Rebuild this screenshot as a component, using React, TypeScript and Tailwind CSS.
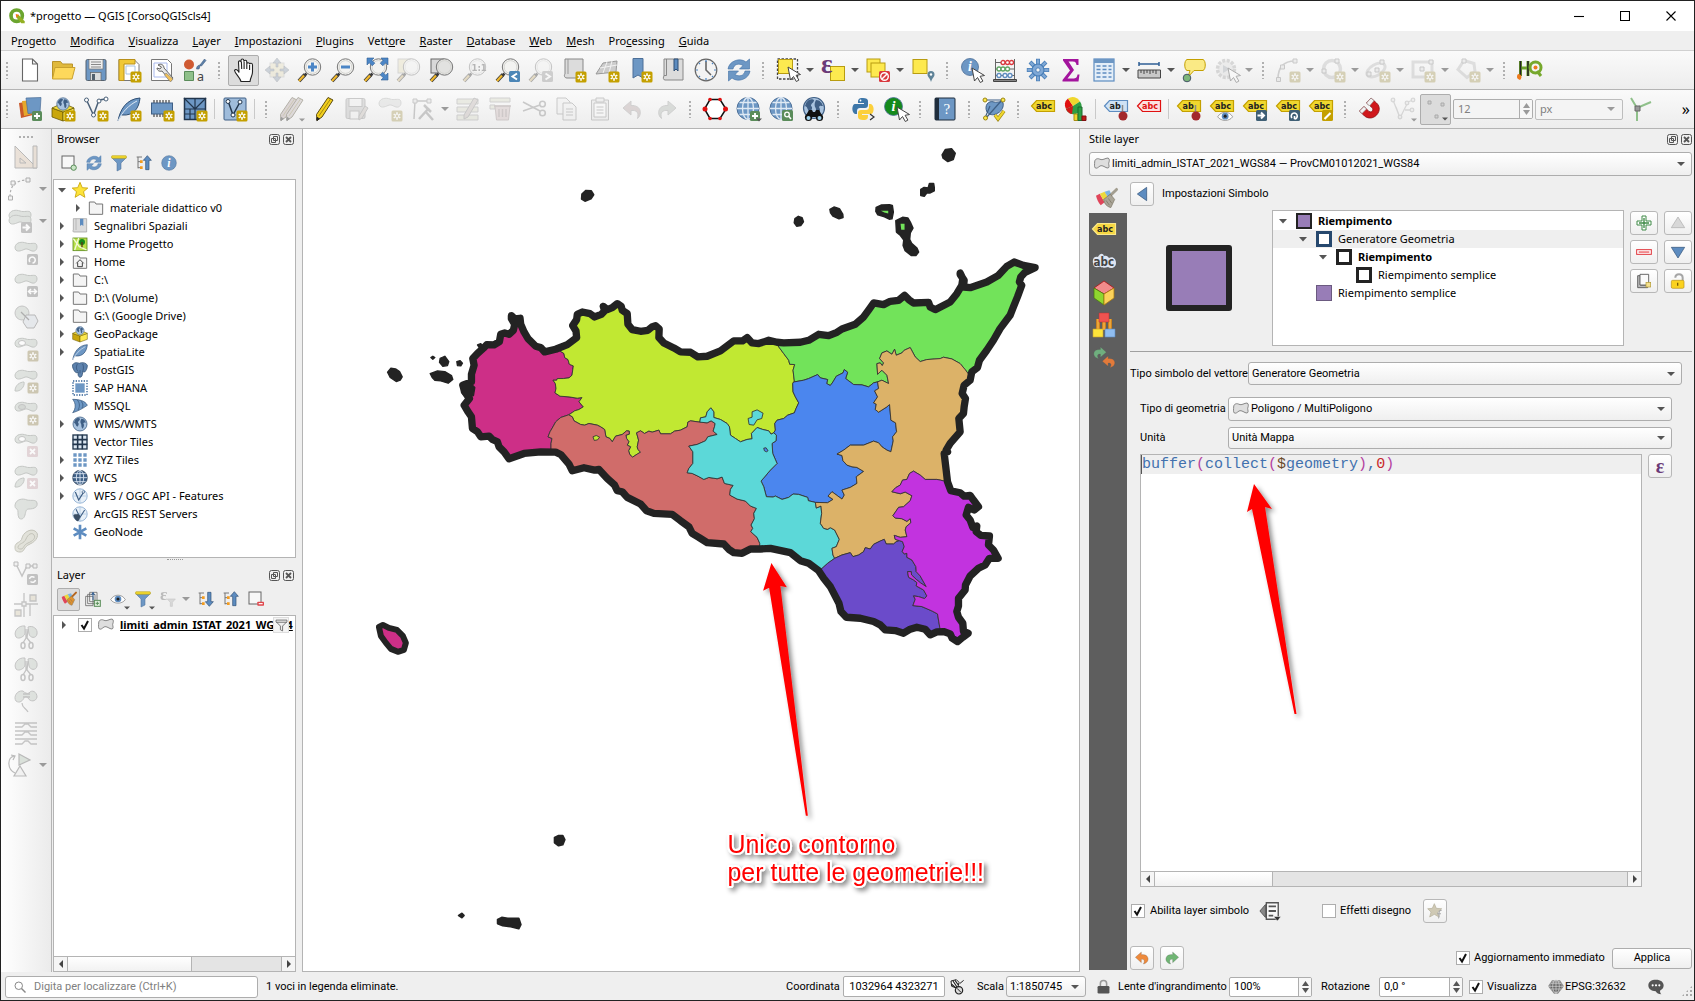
import React from 'react';

type Kids = { children?: React.ReactNode };

const Svg = ({ s = 24, children, className = '' }: Kids & { s?: number; className?: string }) => (
  <svg width={s} height={s} viewBox="0 0 24 24" fill="none" aria-hidden="true" className={`overflow-visible ${className}`}>
    {children}
  </svg>
);

/* ---------- shared icon parts ---------- */

const Star8 = ({ c = '#fff' }) => (
  <path d="M19 15.2v7.6M15.7 17.1l6.6 3.8M15.7 20.9l6.6-3.8" stroke={c} strokeWidth="1.6" />
);
const NewBadge = ({ c = '#c4a000' }) => (
  <g>
    <rect x="13.5" y="13.5" width="11" height="11" rx="1.5" fill={c} />
    <Star8 />
    <circle cx="19" cy="19" r="1.2" fill={c} />
  </g>
);
const PlusBadge = () => (
  <g>
    <rect x="14" y="14" width="10" height="10" rx="1.5" fill="#5a8c5a" />
    <path d="M19 16v6M16 19h6" stroke="#fff" strokeWidth="1.8" />
  </g>
);
const Lens = ({ children, dark = false }: Kids & { dark?: boolean }) => (
  <g>
    <path d="M8.5 15.5l-3 3" stroke="#3b3b3b" strokeWidth="2.6" />
    <path d="M7 16.500l-6 6.500" stroke="#3b3b3b" strokeWidth="3.800" />
    <path d="M6 17.500l-5 5.500" stroke="#f0b82d" strokeWidth="2.200" />
    <circle cx="14.500" cy="9" r="8.200" fill={dark ? '#e2e2e0' : '#f3f3f1'} stroke="#777" strokeWidth="1" />
    <circle cx="14.500" cy="9" r="6.400" stroke="#d6d6d2" strokeWidth="1" />
    {children}
  </g>
);
const Cursor = ({ x = 0, y = 0 }) => (
  <path transform={`translate(${x} ${y})`} d="M11 9l2.500 13 3-3.500 2.800 5 2.600-1.400-2.800-4.800 4.400-.8z" fill="#fff" stroke="#444" strokeWidth="1" />
);
const GlobeShape = ({ dark = false }) => (
  <g>
    <circle cx="12" cy="11.500" r="11" fill={dark ? '#3e5f86' : '#6d97c4'} stroke={dark ? '#26374c' : '#4c6f98'} />
    <path d="M1 11.500h22M12 .5v22M3.500 5.500h17M3.500 17.500h17" stroke="#dfe9f4" strokeWidth="1.300" />
    <ellipse cx="12" cy="11.500" rx="5.500" ry="11" stroke="#dfe9f4" strokeWidth="1.300" />
  </g>
);
const EarthShape = ({ x = 12, y = 12, r = 11 }) => (
  <g transform={`translate(${x} ${y}) scale(${r / 11})`}>
    <circle r="10.500" fill="#a9c3df" stroke="#3f5f85" strokeWidth="1.200" />
    <path d="M-8-5c3-5 7-4 8-3 0 3-3 3-3 6 2 1 1 4-1 6-3-2-2-5-5-6zM2-8c4 0 6 3 7 6-2 0-3-1-4 1 1 2 2 4-1 8-3-2-1-6-3-8-1-3 0-5 1-7z" fill="#3f5f85" />
  </g>
);
const Tag = ({ fill = '#f0d72e', stroke = '#c4a000', color = '#222', y = 4, text = 'abc' }) => (
  <g>
    <path d={`M.500 ${y + 6}l5-5.500h18v11H5.500z`} fill={fill} stroke={stroke} strokeWidth="1.200" />
    <text x={text === 'abc' ? 5 : 5.500} y={y + 9.200} fontFamily="DejaVu Sans Condensed, sans-serif" fontSize="9" fontWeight="bold" fill={color}>{text}</text>
  </g>
);
const Blob = ({ dy = 0 }) => (
  <path transform={`translate(0 ${dy})`} d="M1 6C2 1 8 .500 12 2c4 1.500 9-1 10.500 1.500C24 7 22 11 18 10c-3-1-5-3-8-1.500C7 10 1 12 1 6z" fill="#d3d8d3" stroke="#a9ada9" />
);
const Sq = ({ children, fill = '#a8a8a8' }: Kids & { fill?: string }) => (
  <g>
    <rect x="13" y="13" width="11" height="11" rx="1.500" fill={fill} />
    {children}
  </g>
);
const Pencil = ({ c = '#f2cf1d', x = 0 }) => (
  <g transform={`translate(${x} 0)`}>
    <path d="M16 .5l5 2.500L10 20l-5 3.500L4.500 17.500z" fill={c} stroke="#5a4a12" strokeWidth="1" />
    <path d="M18.500 2L7 18.800" stroke="#a58a10" />
    <path d="M4.800 23.500l.2-3 2.400 1.200z" fill="#222" stroke="#222" />
  </g>
);
const RefreshShape = () => (
  <g fill="#6d97c4" stroke="#3f6fa5" strokeWidth=".6">
    <path d="M1 11C2 3 13-1 19 4l3.500-3v10h-10l3.500-3.500C12 5 7 6 6 11z" />
    <path d="M23 13c-1 8-12 12-18 7l-3.500 3V13h10L8 16.500C12 19 17 18 18 13z" />
  </g>
);
const FunnelShape = ({ fill = '#6d97c4' }) => (
  <g>
    <path d="M1 4l8 8v12l6-3v-9l8-8z" fill={fill} stroke="#4c6f98" strokeWidth=".8" />
    <rect x="1" y="1" width="22" height="4" rx="1" fill="#f0d72e" stroke="#b89c10" strokeWidth=".8" />
  </g>
);
const Info = ({ r = 10, c = '#6d97c4', x = 12, y = 12 }) => (
  <g>
    <circle cx={x} cy={y} r={r} fill={c} stroke="#4c6f98" strokeWidth=".8" />
    <text x={x} y={y + r * 0.5} textAnchor="middle" fontFamily="Liberation Serif, serif" fontStyle="italic" fontWeight="bold" fontSize={r * 1.6} fill="#fff">i</text>
  </g>
);
const Feather = () => (
  <g>
    <path d="M1 24C3 13 9 2 23 1c-1 10-6 18-18 17" fill="#6d97c4" stroke="#2f4f74" strokeWidth="1" />
    <path d="M1 24C5 15 12 8 20 4" stroke="#dfe9f4" strokeWidth="1" />
  </g>
);
const Box3 = () => (
  <g>
    <path d="M1 11l11 4v9L1 20z" fill="#c9a60c" stroke="#6b5a05" strokeWidth=".8" />
    <path d="M23 11l-11 4v9l11-4z" fill="#fce94f" stroke="#6b5a05" strokeWidth=".8" />
    <path d="M1 11l11-5 11 5-11 4z" fill="#f3dc3a" stroke="#6b5a05" strokeWidth=".8" />
    <EarthShape x={12} y={7} r={6.500} />
  </g>
);
const Folder = ({ children }: Kids) => (
  <g>
    <path d="M2 21.500V3h8l2 3h10v15.500z" fill="#f4f4f4" stroke="#777" strokeWidth="1.500" />
    {children}
  </g>
);
const PolyShape = () => (
  <path d="M1 9c0-5 5-6 8-4 4 2 8-2 12-2 3 1 2 5 1 8 0 3 2 6-1 7-4 0-8-5-12-3-3 2-4 4-7 3-2-2-1-6-1-9z" fill="#dedede" stroke="#777" strokeWidth="1.300" />
);
const ArrowUpTree = ({ up = true }) => (
  <g>
    <path d="M1 3h8M3 3v17M3 10h5M3 19h5" stroke="#777" strokeWidth="1.500" />
    <path d="M6 8h4v4H6zM6 17h4v4H6z" fill="#f39b1d" />
    <path d={up ? 'M17 1l6 7h-3.500v14h-5V8H11z' : 'M17 23l6-7h-3.500V2h-5v14H11z'} fill="#5d8cc0" stroke="#2f4f74" />
  </g>
);
const Brush = ({ head = '#aaa598', stick = '#a39e90' }) => (
  <g>
    <path d="M1 9l4-2 5 9-4 3C4 17 2 13 1 9z" fill="#e0455a" />
    <path d="M5 7l5-2 4 6-4 5z" fill="#ecd93c" />
    <path d="M10 5l5-1.500 3 6-4 2z" fill="#7db4e0" />
    <path d="M15.500 9.500L22.500 2.500" stroke={stick} strokeWidth="3" strokeLinecap="round" />
    <path d="M9 13l7-5.500 4.500 5.500-4 8.500c-4-1-7-4-7.500-8.500z" fill={head} stroke="#77705f" strokeWidth=".7" />
    <path d="M11.500 14l3.500 5M14 12l3.500 5" stroke="#77705f" strokeWidth=".7" />
  </g>
);
const Redo = ({ c = '#5fa562', flip = false }) => (
  <path transform={flip ? 'matrix(-1 0 0 1 24 0)' : undefined} d="M13 3l9 8-9 8v-5c-4-.500-6 2-3 7-5-1-8-5-7-9 1-4 5-5.500 10-5z" fill={c} stroke="#555" strokeOpacity=".35" />
);
const Eye = () => (
  <g>
    <path d="M1 13C6 4 18 4 23 13 18 20 6 20 1 13z" fill="#fff" stroke="#777" />
    <circle cx="12" cy="12" r="5" fill="#5d8cc0" />
    <circle cx="12" cy="12" r="2.300" fill="#222" />
  </g>
);
const Epsilon = ({ size = 22, x = 5, y = 17, c = '#6b3a78' }) => (
  <text x={x} y={y} fontFamily="Liberation Serif, serif" fontWeight="bold" fontSize={size} fill={c}>ε</text>
);

/* ---------- icon table ---------- */

const I: Record<string, React.ReactNode> = {
  newDoc: <path d="M4.500 1h10l5 5v17h-15zM14.500 1v5h5" fill="#fff" stroke="#666" strokeWidth="1.100" />,
  open: <g><path d="M1.500 21V3.500h8l2 2.500h10v4" fill="#e0b93c" stroke="#b9932a" /><path d="M1.500 21L4 9.500h20L21 21z" fill="#fdd85b" stroke="#c9a12e" /></g>,
  save: <g><rect x="2" y="1.500" width="20" height="21" rx="1.500" fill="#6d97c4" stroke="#54616e" /><rect x="5" y="1.500" width="14" height="9.500" fill="#eee" stroke="#777" strokeWidth=".7" /><path d="M7 4h10M7 6.500h10M7 9h10" stroke="#888" /><rect x="6.500" y="14.500" width="10.500" height="8" fill="#ddd" stroke="#666" strokeWidth=".7" /><rect x="8" y="16" width="3" height="6" fill="#54616e" /></g>,
  layoutNew: <g><path d="M2 1.500h15l5 5v16H2z" fill="#fff" stroke="#777" /><path d="M2 1.500h16V6H7v16.500H2z" fill="#f0c836" stroke="#b8901a" /><path d="M9 8h9v8H9z" stroke="#a9c3df" /><NewBadge /></g>,
  layoutMgr: <g><path d="M1.500 1.500h16l4 4v17h-20z" fill="#fff" stroke="#777" /><path d="M4 5h13v14H4z" stroke="#a9b9ee" /><path d="M8 7c3-2 6 0 6 3l9 10-2.500 3L12 13c-3 1-5-1-5-3l3 1 1.500-2z" fill="#e7e7e7" stroke="#666" /><path d="M16 15l7 6-2.500 3-6-7z" fill="#f0c05a" stroke="#777" strokeWidth=".6" /></g>,
  styleMgr: <g><circle cx="6" cy="6.500" r="5" fill="#cf5a32" /><path d="M13.500 11c0-3 2-4 4-4l-1.500 4zM17 7l4.500-6L23 2.500 18.500 8z" fill="#5d7fa8" stroke="#3f5f85" strokeWidth=".6" /><path d="M1.500 13.500h9v9h-9z" fill="#8fc08a" stroke="#5a8c5a" /><text x="14" y="22.500" fontFamily="Noto Sans" fontSize="12.500" fill="#444">a</text></g>,
  pan: <path d="M9 23.500c-1-4-6-8-6.500-11 1-2 3.500-.5 4.500 2L6.500 4.500c-.3-2 2.300-2.300 2.700-.3L9 2.500c0-2 2.700-2 2.900 0v1.200c.2-2 2.800-1.800 2.900.2v2c.2-1.700 2.700-1.600 2.800.4.300-1.600 2.900-1.300 2.900.7V14c0 4-2 5-2.500 9.500zM9.400 4l.3 7M12.100 4v7M14.800 5v6M17.600 7v5" fill="#fff" stroke="#222" strokeWidth="1.100" />,
  panSel: <g><rect x="5" y="5" width="14" height="14" fill="#f0e08a" stroke="#bbb" /><path d="M12 0l4 5h-3v4h-2V5H8zM12 24l4-5h-3v-4h-2v4H8zM0 12l5-4v3h4v2H5v3zM24 12l-5-4v3h-4v2h4v3z" fill="#7ea3cd" stroke="#567" strokeWidth=".5" /></g>,
  zoomIn: <Lens><path d="M14.500 4.500v9M10 9h9" stroke="#4c86c6" strokeWidth="3" /></Lens>,
  zoomOut: <Lens><path d="M10 9h9" stroke="#4c86c6" strokeWidth="3" /></Lens>,
  zoomFull: <g><Lens /><path d="M3 0h7L7.800 2.200l3 3-2.600 2.600-3-3L3 7zM24 0v7l-2.200-2.200-3 3-2.600-2.600 3-3L17 0zM24 22h-7l2.200-2.200-3-3 2.600-2.600 3 3L24 15z" fill="#4c86c6" stroke="#2f5f95" strokeWidth=".6" /></g>,
  zoomSel: <g><rect x="1" y="1" width="13" height="14" fill="#f0e08a" stroke="#aaa" /><Lens /></g>,
  zoomLayer: <g><rect x="1" y="1" width="13" height="14" fill="#d8d8d8" stroke="#666" /><Lens dark /></g>,
  zoomNative: <Lens><text x="8.500" y="13" fontFamily="DejaVu Sans Condensed" fontWeight="bold" fontSize="9.500" fill="#555">1:1</text></Lens>,
  zoomLast: <g><Lens /><Sq fill="#4c86b6"><path d="M21 15.500l-4.500 3 4.500 3" stroke="#fff" strokeWidth="2" /></Sq></g>,
  zoomNext: <g><Lens /><Sq fill="#999"><path d="M16.500 15.500l4.500 3-4.500 3" stroke="#fff" strokeWidth="2" /></Sq></g>,
  newMap: <g><path d="M3 1h18v19H5c-3 0-3-3-2-4z" fill="#dcdcdc" stroke="#888" /><path d="M6 1v15" stroke="#999" /><NewBadge /></g>,
  new3d: <g><path d="M1 16L8 5l14-2-1 11z" fill="#ccc" stroke="#999" /><path d="M5 10l17-3M8 15l4-11M14 15l3-12" stroke="#f2f2f2" /><NewBadge /></g>,
  newBook: <g><path d="M5 .500h10V20l-5-3-5 3z" fill="#6d97c4" stroke="#4c6f98" /><NewBadge /></g>,
  book: <g><path d="M3 1h19v21H4c-2 0-2-3-1-4z" fill="#dcdcdc" stroke="#888" /><path d="M5.500 1v16.500H3" stroke="#888" /><path d="M13 1h4v12l-2-2-2 2z" fill="#5d8cc0" stroke="#2f4f74" /></g>,
  clock: <g><circle cx="12" cy="12" r="10.800" fill="#f3f3f3" stroke="#666" strokeWidth="1.200" /><path d="M12 3v9l5 5" stroke="#666" strokeWidth="1.600" /><path d="M12 2v2M12 20v2M2 12h2M20 12h2M5 5l1 1M19 5l-1 1M5 19l1-1M19 19l-1-1" stroke="#4c86c6" strokeWidth="1.200" /></g>,
  refresh: <RefreshShape />,
  select: <g><rect x="1.500" y="1" width="20" height="20" stroke="#444" strokeWidth="1.300" strokeDasharray="2.500 1.500" /><rect x="2.500" y="1.500" width="14" height="14" fill="#fde94f" stroke="#b89c10" /><Cursor x={1} /></g>,
  selEps: <g><rect x="9.500" y="8.500" width="14" height="14" fill="#fde94f" stroke="#b89c10" /><Epsilon size={27} x={0} y={15} /></g>,
  deselect: <g><rect x="1" y="1" width="13" height="13" fill="#fde94f" stroke="#b89c10" /><rect x="5" y="5" width="14" height="14" fill="#fde94f" stroke="#b89c10" /><Sq fill="#d9393e"><circle cx="18.500" cy="18.500" r="3.800" stroke="#fff" strokeWidth="1.400" /><path d="M16 21l5-5" stroke="#fff" strokeWidth="1.400" /></Sq></g>,
  selLoc: <g><rect x="2" y="1.500" width="14" height="14" fill="#fde94f" stroke="#b89c10" /><path d="M20 24c-1-4-3.500-5-3.500-7.500a3.500 3.500 0 017 0C23.500 19 21 20 20 24z" fill="#5f8398" /><circle cx="20" cy="16.500" r="1.200" fill="#fff" /></g>,
  identify: <g><Info r={8.500} x={10} y={9} /><Cursor x={1} y={1} /></g>,
  abacus: <g><path d="M2.500 1v20M21.500 1v20M2 4.500h20M2 11h20M2 17.500h20" stroke="#666" strokeWidth="1" /><path d="M.500 21.500h23v2H.500z" fill="#888" stroke="#444" /><g fill="#fff" strokeWidth="1.300"><g stroke="#d9393e"><circle cx="10" cy="4.500" r="2" /><circle cx="14.500" cy="4.500" r="2" /><circle cx="18.500" cy="4.500" r="2" /></g><g stroke="#5fa562"><circle cx="6" cy="11" r="2" /><circle cx="10" cy="11" r="2" /><circle cx="14.500" cy="11" r="2" /></g><g stroke="#5d8cc0"><circle cx="6" cy="17.500" r="2" /><circle cx="12" cy="17.500" r="2" /><circle cx="17" cy="17.500" r="2" /></g></g></g>,
  gear: <g stroke="#4c80b8"><g strokeWidth="4"><path d="M12 .800v22.400M.800 12h22.400M4 4l16 16M20 4L4 20" /></g><g stroke="#7fa8d6" strokeWidth="2.400"><path d="M12 1.500v21M1.500 12h21M4.500 4.500l15 15M19.500 4.500l-15 15" /></g><circle cx="12" cy="12" r="6" fill="#7fa8d6" strokeWidth="1.200" /><circle cx="12" cy="12" r="2.200" fill="#f4f4f4" /></g>,
  sigma: <path d="M4 1h15.500v6h-2C17 4 16 3.500 13 3.500H9.500L15 12l-6.500 8.500H14c3 0 4-1 4.500-4h2L19.500 23.500H3.500V22L11 12.500 4 2.500z" fill="#a3149d" />,
  table: <g><rect x="2" y="1" width="20" height="22" fill="#e4eef8" stroke="#5d8cc0" strokeWidth="1.200" /><path d="M2 1h20v4H2z" fill="#6d97c4" /><path d="M4.500 8h4M10.500 8h4M16.500 8h3M4.500 11.500h4M10.500 11.500h4M16.500 11.500h3M4.500 15h4M10.500 15h4M16.500 15h3M4.500 19h4M10.500 19h4M16.500 19h3" stroke="#5d8cc0" strokeWidth="1.400" /></g>,
  measure: <g><path d="M2 6h20M2 4v4M22 4v4" stroke="#2f5f95" strokeWidth="1.500" /><path d="M1 12h22.500v8H1z" fill="#c8c8c8" stroke="#444" /><path d="M4 12v3M7 12v4M10 12v3M13 12v4M16 12v3M19 12v4" stroke="#444" /></g>,
  tip: <g><path d="M5 1.500h16c3 1 3 10 0 11H12L6 19l2-6.500H5c-3-1-3-10 0-11z" fill="#faea85" stroke="#c4a000" /><circle cx="5" cy="20" r="3.800" fill="#7db67a" stroke="#456" /></g>,
  action: <g><circle cx="11" cy="11" r="8.500" fill="#ddd" stroke="#aaa" strokeWidth="3.500" strokeDasharray="3 1.500" /><path d="M8 7l7 4-7 4z" fill="#9ab" /><Cursor x={2} y={1} /></g>,
  arc: <g><path d="M2 21C2 9 8 3 19 3" stroke="#999" strokeWidth="1.600" /><path d="M.500 19.500h4v4h-4zM4.500 7h4v4h-4zM17 1h4v4h-4z" fill="#ddd" stroke="#888" /><NewBadge /></g>,
  circ: <g><circle cx="11" cy="11" r="8.500" stroke="#bbb" strokeWidth="3.500" /><path d="M14 1h4v4h-4zM1 11h4v4H1z" fill="#ddd" stroke="#888" /><NewBadge /></g>,
  ellip: <g><ellipse cx="10" cy="12" rx="10" ry="5.500" transform="rotate(-30 10 12)" stroke="#bbb" strokeWidth="3" /><path d="M9 10h4v4H9zM14 2h4v4h-4zM1 14h4v4H1z" fill="#ddd" stroke="#888" /><NewBadge /></g>,
  rectg: <g><rect x="2" y="4" width="19" height="15" stroke="#bbb" strokeWidth="3" /><path d="M9 9h4v4H9zM18 2h4v4h-4z" fill="#ddd" stroke="#888" /><NewBadge /></g>,
  poly: <g><path d="M8 2.500l10 3 1 8-8 6-9-8z" stroke="#bbb" strokeWidth="3" /><path d="M6 1h4v4H6z" fill="#ddd" stroke="#888" /><NewBadge /></g>,
  hq: <g><path d="M3.500 3v15M11 3v15M2.500 10h9" stroke="#6da32b" strokeWidth="3" /><path d="M3.500 3v15M11 3v15" stroke="#222" strokeWidth="1.600" /><circle cx="18.500" cy="9.500" r="5.500" stroke="#76a82c" strokeWidth="3" /><path d="M20 13l4 5" stroke="#76a82c" strokeWidth="3" /><circle cx="18.500" cy="9.500" r="2" fill="#ee7a1c" /><path d="M3 22c-3-1-4-3-2-6 3 0 5 3 2 6z" fill="#ee7a1c" /></g>,

  dsm: <g><path d="M1 6l12-2 2 14-12 3z" fill="#c9592a" /><path d="M4 4l12-1 2 13-12 3z" fill="#e5a82c" /><path d="M8 1l15-.5-1 15-12 1z" fill="#6d97c4" stroke="#4c6f98" strokeWidth=".7" /><PlusBadge /></g>,
  gpkg: <g><Box3 /><NewBadge /></g>,
  shp: <g><path d="M2.500 3l7 15 5.500-15 7-1" stroke="#4a6078" strokeWidth="1.500" /><g fill="#fff" stroke="#4a6078"><circle cx="2.500" cy="3" r="2" /><circle cx="9.500" cy="18" r="2" /><circle cx="15" cy="4" r="2" /><circle cx="22" cy="2" r="2" /></g><NewBadge /></g>,
  spl: <g><Feather /><NewBadge /></g>,
  chip: <g><path d="M4 3v17M7 3v17M10 3v17M13 3v17M16 3v17M19 3v17" stroke="#333" strokeWidth="1.100" /><rect x="1.500" y="6" width="21" height="11" fill="#6d97c4" stroke="#3f5f85" /><NewBadge /></g>,
  mesh: <g><rect x="1.500" y="1.500" width="21" height="21" fill="#6d97c4" stroke="#22364d" strokeWidth="1.500" /><path d="M12 1v22M1 12h22M1 1l11 11M12 12L23 1M7 12v11M1 17h11" stroke="#22364d" strokeWidth="1.200" /><NewBadge /></g>,
  virt: <g><rect x="1" y="1" width="22" height="22" rx="1" fill="#9fbcdb" stroke="#3f5f85" /><path d="M5 4l5 14 7-13" stroke="#22364d" strokeWidth="1.500" /><g fill="#fff" stroke="#22364d"><circle cx="5" cy="4.500" r="2" /><circle cx="10" cy="18" r="2" /><circle cx="17" cy="5" r="2" /></g><NewBadge /></g>,
  pencils: <g><Pencil c="#c9a0a0" x={-3} /><Pencil c="#c9b0b0" x={3} /></g>,
  pencil: <Pencil />,
  saveEd: <g><rect x="1" y="1.500" width="19" height="20" rx="1.500" fill="#bbb" stroke="#888" /><rect x="4" y="1.500" width="13" height="8" fill="#eee" stroke="#888" /><rect x="5" y="14" width="9" height="8" fill="#eee" stroke="#888" /><path d="M20 9l3 2-6 10-3 2v-4z" fill="#cba" stroke="#888" /></g>,
  addPoly: <g><Blob /><NewBadge /></g>,
  vertex: <g><path d="M3 22L4 4h14" stroke="#888" strokeWidth="1.500" /><path d="M2 2h4v4H2zM16 2h4v4h-4z" fill="#ddd" stroke="#888" /><path d="M8 22l10-11M13 8l7 7M14 14l8 9" stroke="#888" strokeWidth="2.500" /></g>,
  multi: <g><path d="M1 2h21v5H1zM1 10h21v5H1zM1 18h21v5H1z" fill="#d9dcae" stroke="#999" /><path d="M18 1l4 2-10 17-4 2v-4z" fill="#ccb3a9" stroke="#888" /></g>,
  trash: <g><path d="M1 1h20v4H1zM1 8h5v4H1z" fill="#d9dcae" stroke="#999" /><path d="M6 9h15l-1.500 14h-12z" fill="#e0b5b5" stroke="#a88" /><path d="M5 9h17M10 12v8M13.500 12v8M17 12v8" stroke="#a88" strokeWidth="1.500" /></g>,
  cut: <g stroke="#888" strokeWidth="1.600"><path d="M1 5l17 9M1 14l17-6" /><circle cx="20.500" cy="16" r="2.800" /><circle cx="20.500" cy="7" r="2.800" /></g>,
  copy: <g fill="#eee" stroke="#888"><path d="M2 1h9l4 4v12H2z" /><path d="M8 6h9l4 4v13H8z" /><path d="M11 12h7M11 15h7M11 18h7" /></g>,
  paste: <g fill="#e4e4e4" stroke="#888"><path d="M3.500 3h17v20h-17z" /><path d="M6 6h12v14H6z" fill="#fafafa" /><path d="M8 1h8v4H8zM8.500 10h7M8.500 13h7M8.500 16h7" /></g>,
  undo: <path d="M10 4L2 11l8 7v-4.500c6-.500 8 2 6.500 8C21 18 21 8 10 8.500z" fill="#c9a0a0" stroke="#999" />,
  redo: <path d="M14 4l8 7-8 7v-4.500c-6-.500-8 2-6.500 8C3 18 3 8 14 8.500z" fill="#a9b9a9" stroke="#999" />,
  hex: <g><path d="M7 2.500h10l6 9.500-6 9.500H7L1.500 12z" fill="#fff" stroke="#111" strokeWidth="1.500" /><g fill="#e01010"><circle cx="7" cy="2.500" r="1.800" /><circle cx="17" cy="2.500" r="1.800" /><circle cx="22.500" cy="12" r="2.500" /><circle cx="17" cy="21.500" r="1.800" /><circle cx="7" cy="21.500" r="1.800" /><circle cx="2" cy="12" r="2.500" /></g></g>,
  globeAdd: <g><GlobeShape /><PlusBadge /></g>,
  globeFind: <g><GlobeShape /><Sq fill="#5a8c5a"><circle cx="18" cy="17.500" r="2.300" stroke="#fff" strokeWidth="1.300" /><path d="M19.500 19l2.500 3" stroke="#fff" strokeWidth="1.500" /></Sq></g>,
  globeBin: <g><EarthShape y={11} /><path d="M3 20l4-7h3l1 2h2l1-2h3l4 7" fill="#111" /><circle cx="6.500" cy="20.500" r="3.600" fill="#111" /><circle cx="17.500" cy="20.500" r="3.600" fill="#111" /><path d="M9 15h6v5H9z" fill="#111" /><circle cx="6.500" cy="21" r="2" fill="#9fd3ee" /><circle cx="17.500" cy="21" r="2" fill="#9fd3ee" /></g>,
  python: <g><path d="M12 1C7 1 7 3 7 6h6v1H4c-3 0-4 8 0 10h2v-3c0-2 1-3 3-3h5c2 0 3-1 3-3V4c0-2-2-3-5-3z" fill="#3d76a8" /><path d="M12 23c5 0 5-2 5-5h-6v-1h9c3 0 4-8 0-10h-2v3c0 2-1 3-3 3h-5c-2 0-3 1-3 3v4c0 2 2 3 5 3z" fill="#fcd03b" /><circle cx="9.500" cy="3.500" r=".9" fill="#fff" /><path d="M19 17l4 3-4 3" stroke="#333" strokeWidth="1.200" /></g>,
  infoGreen: <g><Info r={9} x={9.500} y={9.500} c="#148a1c" /><Cursor x={2} y={1} /></g>,
  help: <g><rect x="2" y="1" width="20" height="22" rx="1" fill="#6d97c4" stroke="#1f2d3d" /><path d="M2 1h4v22H2z" fill="#1f2d3d" /><text x="10.500" y="17" fontFamily="Liberation Serif" fontSize="15" fill="#fff">?</text></g>,
  topo: <g><path d="M5 15C2 9 6 3 12 5c4 1 8-2 9 1s-1 8-5 10-7 3-11-1z" fill="#6d97c4" stroke="#3f5f85" /><path d="M3 3l17 0M20 3L4 21M3 21L8 9" stroke="#3f5f85" strokeWidth="1.200" /><g fill="#fce94f" stroke="#9b8512"><circle cx="3" cy="3" r="2" /><circle cx="21" cy="3" r="2" /><circle cx="3.500" cy="21" r="2" /></g><path d="M13 18l3 4 6-8" stroke="#9b8512" strokeWidth="3.600" /><path d="M13 18l3 4 6-8" stroke="#f0d72e" strokeWidth="2.200" /></g>,
  abc: <Tag y={3} />,
  diagram: <g><path d="M9 9L2 12A8 8 0 014 1.500z" fill="#e01010" /><path d="M9 9L4 1.500a8 8 0 0112 3z" fill="#f0d72e" /><path d="M9 9l7-4.500A8 8 0 018 17a8 8 0 01-6-5z" fill="#2f9e44" /><path d="M9 9L2 12a8 8 0 006 5z" fill="#d01818" /><path d="M10 17h4v6.500h-4z" fill="#f0d72e" stroke="#a88c10" /><path d="M14 10h4v13.500h-4z" fill="#2f9e44" stroke="#1c6b2c" /><path d="M18 19h4v4.500h-4z" fill="#c01818" stroke="#801010" /></g>,
  abcPinBlue: <g><Tag fill="#cfe2f5" stroke="#5d8cc0" text="ab" y={3} /><path d="M18.500 8v8" stroke="#888" strokeWidth="1.500" /><circle cx="19" cy="19" r="4.500" fill="#a3282c" /></g>,
  abcRed: <Tag fill="#fce0e0" stroke="#e01010" color="#e01010" y={3} />,
  abcPin: <g><Tag text="ab" y={3} /><path d="M18.500 8v8" stroke="#888" strokeWidth="1.500" /><circle cx="19" cy="19" r="4.500" fill="#a3282c" /></g>,
  abcEye: <g><Tag y={3} /><g transform="translate(7 11) scale(.68)"><Eye /></g></g>,
  abcMove: <g><Tag y={3} /><Sq fill="#3f5f75"><path d="M14.500 18.500h6M18 15.500l3 3-3 3" stroke="#fff" strokeWidth="2" /></Sq></g>,
  abcRot: <g><Tag y={3} /><Sq fill="#3f5f75"><path d="M16 21a3 3 0 112.500 1M18.500 22V19" stroke="#fff" strokeWidth="1.600" /></Sq></g>,
  abcEdit: <g><Tag y={3} /><Sq fill="#c4a000"><path d="M15.500 22l6-6" stroke="#fff" strokeWidth="2.200" /></Sq></g>,
  magnet: <g><path d="M13 1l5.500 5c8 7-3 20-12 13L1.500 14l4.500-4.500 5 5c3 1.500 5-1.500 3-4L8.500 6z" fill="#d0181c" stroke="#8c0d10" strokeWidth=".8" /><path d="M8.500 6L13 1l3 2.700L11.500 9zM1.500 14L6 9.500l2.500 2.500-4.500 4.500z" fill="#f2f2f2" stroke="#888" strokeWidth=".6" /></g>,
  snapV: <g stroke="#aaa" strokeWidth="1.300"><path d="M2 3l7 18L17 5l5-2M5 10l4 11M14 13h7" /><g fill="#e4e4e4"><circle cx="2" cy="3" r="1.800" /><circle cx="9" cy="20" r="1.800" /><circle cx="16" cy="6" r="1.800" /><circle cx="22" cy="3" r="1.800" /><circle cx="21" cy="13" r="1.800" /></g></g>,
  dots: <g stroke="#aaa" fill="#d0d0d0"><path d="M4 4h3v3H4zM17 6h3v3h-3zM11 18h3v3h-3z" /></g>,
  tee: <g><path d="M2 1l6 10 14-6M8 11v13" stroke="#8fc08a" strokeWidth="2" /><path d="M6 9h5v5H6z" fill="#999" stroke="#666" /></g>,

  square: <g fill="#e4d6c8" stroke="#999"><path d="M1 1v22h22zM6 13v5h6z" /><path d="M19 1h4v22h-4z" /></g>,
  segs: <g><path d="M2 20C2 8 8 3 20 3" stroke="#888" strokeWidth="1.200" strokeDasharray="2.500 2" /><path d="M.500 19h4v4h-4zM3 4h4v4H3zM18 1h4v4h-4z" fill="#eee" stroke="#888" /></g>,
  moveF: <g><Blob /><Blob dy={5} /><Sq><path d="M14.500 18.500h6M18 15.500l3 3-3 3" stroke="#fff" strokeWidth="2" /></Sq></g>,
  rotF: <g><Blob /><Sq><path d="M16 21a3 3 0 112.500 1" stroke="#fff" strokeWidth="1.600" /></Sq></g>,
  scaleF: <g><Blob /><Sq><path d="M14.500 18.500h8M17 16l-2.500 2.500L17 21M20 16l2.500 2.500L20 21" stroke="#fff" strokeWidth="1.500" /></Sq></g>,
  simpl: <g><circle cx="8" cy="8" r="7" fill="#d3d8d3" stroke="#aaa" /><path d="M12 10h9l3 6-4 7h-7l-4-6z" fill="#dfe3e8" stroke="#999" /><path d="M7 7l8 8" stroke="#888" strokeWidth="1.200" /></g>,
  ring: <g><Blob /><ellipse cx="8" cy="6" rx="3.500" ry="2.500" fill="#fff" stroke="#aaa" /><NewBadge c="#b9b090" /></g>,
  part: <g><Blob /><path d="M1 22c0-6 5-9 9-9 1 4-3 10-9 9z" fill="#d3d8d3" stroke="#a9ada9" /><NewBadge c="#b9b090" /></g>,
  fillR: <g><Blob /><ellipse cx="8" cy="6" rx="3.500" ry="2.500" fill="#c2c8c2" stroke="#aaa" /><NewBadge c="#b9b090" /></g>,
  delR: <g><Blob /><ellipse cx="8" cy="6" rx="3.500" ry="2.500" fill="#fff" stroke="#aaa" /><Sq fill="#d9c4c8"><path d="M16 16l5 5M21 16l-5 5" stroke="#fff" strokeWidth="1.800" /></Sq></g>,
  delP: <g><Blob /><path d="M1 22c0-6 5-9 9-9 1 4-3 10-9 9z" fill="#d3d8d3" stroke="#a9ada9" /><Sq fill="#d9c4c8"><path d="M16 16l5 5M21 16l-5 5" stroke="#fff" strokeWidth="1.800" /></Sq></g>,
  resh: <path d="M1 8C2 2 9 1 13 3c5 1 9-1 10 3s-3 6-8 6c-3 0-3 2-4 6s-4 5-6 3c-2-4 0-7-2-9C1 11 1 10 1 8z" fill="#d3d8d3" stroke="#a9ada9" />,
  offset: <g fill="#d8d8cc" stroke="#a9a99a"><path d="M1 18c0-5 6-4 7-9S16-1 21 2s2 10-5 13-5 8-10 8-5-3-5-5z" /><path d="M4 18c1-4 6-3 8-8s6-7 8-4-1 6-6 8-4 6-7 6-3-1-3-2z" /></g>,
  split1: <g><path d="M2 3l6 12 5-10h9" stroke="#aaa" strokeWidth="1.500" /><path d="M0 1h4v4H0zM12 3h4v4h-4zM19 3h4v4h-4z" fill="#eee" stroke="#999" /><Sq><path d="M15.500 18a3 3 0 015-1.500M21.500 19a3 3 0 01-5 1.500" stroke="#fff" strokeWidth="1.500" /></Sq></g>,
  trim: <g stroke="#aaa" strokeWidth="1.300"><path d="M10 0v24M0 11h24M16 11v12" /><path d="M16 2h6v6h-6zM1 17h6v6H1z" fill="#e2dccb" /><path d="M8 9h4v4H8z" fill="#eee" /></g>,
  scis: <g stroke="#a9a9a9"><path d="M11 1c-7-1-12 6-9 11 3 3 9-1 9-4zM14 2c5-2 10 2 9 7-1 5-7 4-8 0z" fill="#d3d8d3" /><path d="M12 4v9l-3 5M14 4l-1 9 4 5" strokeWidth="1.300" /><ellipse cx="9" cy="20.500" rx="2" ry="3" strokeWidth="1.500" /><ellipse cx="17" cy="20.500" rx="2" ry="3" strokeWidth="1.500" /></g>,
  merge: <g stroke="#a9a9a9"><path d="M9 2C3 1-1 8 2 12c4 3 7-1 8-3 1-2 3-2 4 0 2 4 8 4 9-1 0-5-5-8-8-4-2 1-4 0-6-2z" fill="#d3d8d3" /><path d="M9 5h7M9 8h7M8 14c0 5 4 5 6 9" strokeWidth="1.300" /></g>,
  rungs: <g stroke="#aaa" strokeWidth="1.300"><path d="M1 2h22M1 6h7l3-3h3l3 3h6M1 10h22M1 14h7l3-3h3l3 3h6M1 18h22M1 23h7l3-3h3l3 3h6" /></g>,
  rotS: <g stroke="#999" strokeWidth="1.200"><path d="M7 20C-1 16-1 5 6 3M3 2l4 1-2 4" /><path d="M11 1l11 6-11 5z" fill="#ccd6cc" /><path d="M12 13l6 10H6z" fill="#eee" /></g>,

  addSel: <g><rect x="1.500" y="1.500" width="18" height="18" fill="#f8f8f8" stroke="#666" strokeWidth="1.500" /><circle cx="19" cy="19" r="4" fill="#c9e6c6" stroke="#5a8c5a" strokeWidth="1.500" /></g>,
  funnel: <FunnelShape />,
  up: <ArrowUpTree />,
  down: <ArrowUpTree up={false} />,
  info: <Info r={11} />,
  star: <path d="M12 .500l3.400 8 8.300.6-6.400 5.400 2 8.500L12 18.500 4.700 23l2-8.500L.300 9.100l8.300-.6z" fill="#fde33a" stroke="#c4a000" strokeWidth="1.200" />,
  folder: <Folder />,
  bmark: <g><path d="M2 1h20v20H3c-2 0-2-2-1-3z" fill="#dcdcdc" stroke="#999" /><path d="M6 1v17" stroke="#aaa" /><path d="M12 1h5v11l-2.500-2-2.500 2z" fill="#5d8cc0" /></g>,
  homeProj: <g><rect x="1.500" y="3" width="21" height="19" fill="#b8e04a" stroke="#5c8a1c" strokeWidth="1.200" /><path d="M2 4l9 12 11 5M10 3l-6 18" stroke="#f4f9d8" strokeWidth="2" /><circle cx="15" cy="9" r="4.500" fill="#178a1c" /><path d="M15 9v8" stroke="#5c3a10" strokeWidth="2" /></g>,
  home: <Folder><path d="M6.500 14L12 8.500l5.500 5.500M8.500 13v6h7v-6" stroke="#333" strokeWidth="1.400" /></Folder>,
  box: <Box3 />,
  feather: <Feather />,
  pg: <g><path d="M1 4c3-4 7-3 10-2 4-2 10-1 12 3 0 5-2 8-4 10-2 0-3-1-3 1-1 3 0 6-4 7-3-1-3-4-3-8-1 2-4 1-5-1C2 11 0 7 1 4z" fill="#5d82ad" stroke="#2f4f74" strokeWidth="1.200" /><path d="M8 3c-2 4-2 8 1 11M16 3c2 4 1 8 0 12M12 12v5" stroke="#2f4f74" /></g>,
  hana: <g><rect x="5" y="5" width="14" height="14" fill="#6d97c4" /><rect x="1.500" y="1.500" width="21" height="21" stroke="#2f5f95" strokeWidth="2" strokeDasharray="2 2" /></g>,
  ms: <g><path d="M1 2c9 0 19 2 22 9C17 15 9 20 1 22c5-6 5-14 0-20z" fill="#6d97c4" stroke="#2f4f74" /><path d="M8 3c4 5 4 10 1 15M14 5c3 4 3 7 1 10" stroke="#2f4f74" /></g>,
  earth: <EarthShape />,
  vtiles: <g><rect x="1.500" y="1.500" width="21" height="21" fill="#dce7f2" stroke="#22364d" strokeWidth="2" /><path d="M8.500 1v22M15.500 1v22M1 8.500h22M1 15.500h22" stroke="#22364d" strokeWidth="2.400" /></g>,
  xyz: <path d="M2 2h5v5H2zM9.500 2h5v5h-5zM17 2h5v5h-5zM2 9.500h5v5H2zM9.500 9.500h5v5h-5zM17 9.500h5v5h-5zM2 17h5v5H2zM9.500 17h5v5h-5zM17 17h5v5h-5z" fill="#6d97c4" />,
  wcs: <GlobeShape dark />,
  wfs: <g><circle cx="12" cy="12" r="10.800" fill="#e8f0f8" stroke="#6d97c4" /><path d="M2 12h20M12 1v22" stroke="#a9c3df" /><path d="M5 6l5 12 7-11" stroke="#3f5f85" strokeWidth="1.800" /><circle cx="17" cy="6" r="2" stroke="#3f5f85" /></g>,
  arcgis: <g><circle cx="12" cy="12" r="10.800" fill="#e8f0f8" stroke="#6d97c4" /><path d="M2 12h20M12 1v22" stroke="#a9c3df" /><path d="M6 5l6 12 7-11" stroke="#3f5f85" strokeWidth="1.600" /><path d="M2 14c2-3 4-1 6-2 2 1 4 1 4 4s-1 6-4 7c-3-2-5-5-6-9z" fill="#3a4d63" /></g>,
  geonode: <path d="M12 1v22M2.500 6.500l19 11M21.500 6.500l-19 11" stroke="#5d8cc0" strokeWidth="4" />,

  brush: <Brush />,
  brushO: <Brush head="#e2912c" stick="#b5651d" />,
  groupAdd: <g><path d="M1 8h11v14H1zM4 5h11v14H4zM7 2h11v14H7z" fill="#f4f4f4" stroke="#666" strokeWidth="1.200" /><path d="M12 4v10M10 6l2-4 2 4" stroke="#2f5f95" strokeWidth="1.500" /><rect x="14" y="14" width="9" height="9" fill="#dff0dc" stroke="#5a8c5a" strokeWidth="1.500" /><path d="M18.500 16v5M16 18.500h5" stroke="#5a8c5a" strokeWidth="1.500" /></g>,
  eye: <Eye />,
  epsF: <g><Epsilon size={26} x={0} y={14} c="#999" /><path d="M11 12h12l-4.500 5v6h-3v-6z" fill="#ccc" stroke="#aaa" /></g>,
  remove: <g><rect x="1.500" y="1.500" width="18" height="18" fill="#f8f8f8" stroke="#666" strokeWidth="1.500" /><rect x="14" y="16" width="10" height="6" rx="1" fill="#e0444a" /><path d="M16 19h6" stroke="#fff" strokeWidth="1.800" /></g>,
  polygon: <PolyShape />,
  filterGrey: <path d="M2 2h20v3l-8 8v9l-4-2v-7L2 5zM2 6h20" fill="#eee" stroke="#666" strokeWidth="1.600" />,

  abcYellow: <Tag y={6} fill="#f6d743" stroke="#fbe98a" />,
  abcMask: <g><path d="M1 14c-1-5 2-7 5-6 2-4 5-4 6-1 3-1 4 1 5 2 4-2 7 1 7 5 0 5-5 6-8 4-3 1-6 1-8-.5C4 19 1 18 1 14z" fill="#dfe6f2" /><text x="1.500" y="17" fontFamily="DejaVu Sans Condensed" fontWeight="bold" fontSize="11.500" fill="#444">abc</text></g>,
  cube: <g strokeWidth=".8"><path d="M12 0l10 7-10 6L2 7z" fill="#f28b8b" stroke="#a11" /><path d="M2 7l10 6v11L2 17z" fill="#8fd62f" stroke="#4a7a10" /><path d="M22 7l-10 6v11l10-7z" fill="#fbd25a" stroke="#a87a10" /></g>,
  tree3: <g><path d="M6 18V6M12 8v9M18 6v12" stroke="#c27a1a" strokeWidth="4" /><path d="M6 18V6M12 8v9M18 6v12" stroke="#eba53a" strokeWidth="2.400" /><path d="M7 0h10v9H7z" fill="#ef5350" stroke="#b33" strokeWidth=".5" /><path d="M1 16h10v8H1z" fill="#fde33a" stroke="#c9a12e" strokeWidth=".6" /><path d="M13 16h10v8H13z" fill="#8fbdf0" stroke="#5d8cc0" strokeWidth=".6" /></g>,
  history: <g><g transform="translate(0 0) scale(.65)"><Redo c="#6fae7e" /></g><g transform="translate(9 9) scale(.65)"><Redo c="#e27a3a" flip /></g></g>,
  back: <path d="M19 2v20L5 12z" fill="#5d8cc0" stroke="#2f4f74" />,
  plus: <g><path d="M9 1.500h6V9h7.500v6H15v7.500H9V15H1.500V9H9z" fill="#fff" stroke="#3f8a46" strokeWidth="1.500" /><path d="M12 4.500v15M4.500 12h15" stroke="#3f8a46" strokeWidth="2" /></g>,
  minus: <g><rect x="1" y="8.500" width="22" height="7" fill="#fff" stroke="#e0343a" strokeWidth="1.500" /><rect x="4" y="11" width="16" height="2.200" fill="#ee6a6f" /></g>,
  dup: <g><path d="M2.500 4h4v14h11v4h-15z" fill="#bbb" stroke="#555" strokeWidth="1.300" /><path d="M6 2h13v16H6z" fill="#fafafa" stroke="#555" strokeWidth="1.300" /><rect x="15" y="14" width="7" height="7" fill="#f3e08f" stroke="#b39a30" /></g>,
  triUp: <path d="M12 3l10 16H2z" fill="#d8d8d8" stroke="#aaa" />,
  triDown: <path d="M12 21L22 5H2z" fill="#5d8cc0" stroke="#2f4f74" />,
  lockOpen: <g><path d="M8 7c0-7 11-7 11 0v5" stroke="#a5a5a5" strokeWidth="3" /><rect x="2" y="11" width="19" height="12" rx="2" fill="#fbd21f" stroke="#b8901a" /><path d="M11.500 14.500v4.500" stroke="#7a5d05" strokeWidth="2" /></g>,
  defined: <g><path d="M1 12l6-7v14z" fill="#888" stroke="#555" /><path d="M8 3h13v18H8z" fill="#f8f8f8" stroke="#555" strokeWidth="1.500" /><path d="M10.500 7h8M10.500 12h8M10.500 17h5" stroke="#555" strokeWidth="2" /><path d="M16 18h8l-4 5z" fill="#333" stroke="#f0f0f0" strokeWidth=".6" /></g>,
  fx: <g><path d="M11 1l3 7 8 .6-6 5 2 7.400-7-4-7 4 2-7.400-5-5L8 8z" fill="#cfc9b4" stroke="#b3ad98" /><path d="M17 23c2-2 1-5 1-8s2-4 4-4M15 16h6" stroke="#aaa" strokeWidth="1.600" /></g>,
  undoO: <Redo c="#ee8a3c" flip />,
  redoG: <Redo c="#6fb573" />,
  search: <g stroke="#888" strokeWidth="2"><circle cx="9.500" cy="9.500" r="7.500" /><path d="M15 15l8 8" strokeWidth="2.800" /></g>,
  lock: <g><path d="M7 11V7c0-6 10-6 10 0v4" stroke="#999" strokeWidth="2.500" /><rect x="2.500" y="11" width="19" height="12" rx="2" fill="#555" /></g>,
  mouse: <g stroke="#222"><path d="M3 3l8-2 4 4-2 9-9-3z" fill="#fff" strokeWidth="1.500" /><path d="M6 3l6 9M9 2l5 7M4 8l6 5" strokeWidth="1.800" /><circle cx="15" cy="17" r="5.500" fill="#ddd" strokeWidth="1.800" /><path d="M12 14l6 6M16 7l6-5" strokeWidth="1.500" /></g>,
  globeG: <g><path d="M0 11L6 2h12l6 9-9 11H9z" fill="#8a8a8a" /><circle cx="12" cy="11" r="8" fill="#666" /><path d="M0 11h24M4 7h16M4 15h16M12 1v21M6 4.500h12" stroke="#e4e4e4" strokeWidth=".9" /><ellipse cx="12" cy="11" rx="5" ry="10" stroke="#e4e4e4" strokeWidth=".9" /></g>,
  bubble: <g><path d="M12 1c7 0 11.500 3.500 11.500 8.500 0 4-2 6-5.500 8 0 3 1 4 2 5.500-4 0-7-2-8.500-4.500C5 18 .500 15 .500 9.500S5 1 12 1z" fill="#555" /><g fill="#fff"><circle cx="7" cy="9.500" r="1.600" /><circle cx="12" cy="9.500" r="1.600" /><circle cx="17" cy="9.500" r="1.600" /></g></g>,
};

/* ---------- small controls ---------- */

const Caret = ({ off = false, s = 8 }) => (
  <svg width={s} height={s} viewBox="0 0 8 8" aria-hidden="true" className="shrink-0">
    <path d="M0 2h8L4 6z" fill={off ? '#9a9a9a' : '#555'} />
  </svg>
);
const Handle = ({ first = false }) => (
  <div className={`${first ? 'w-3' : 'w-4'} flex h-full shrink-0 items-center justify-center`}>
    <div className="h-[18px] w-1 bg-[radial-gradient(circle,#b0b0b0_35%,transparent_40%)] bg-[length:4px_4px] bg-repeat px-0.5" />
  </div>
);
const Sep = () => <div className="mx-[3px] h-5 w-px shrink-0 bg-[#c9c9c9]" />;

type BarItem = [string, string, string?]; // icon, label, flags: d = disabled, a = arrow, p = pressed, c = corner arrow
const TB = ({ item, v = false }: { item: BarItem; v?: boolean }) => {
  const [icon, label, f = ''] = item;
  const dim = f.includes('d');
  return (
    <div className={`flex shrink-0 items-center ${v ? 'h-8 justify-center' : ''}`}>
      <button
        aria-label={label}
        disabled={dim}
        className={`relative flex h-[31px] items-center justify-center rounded-[2px] ${f.includes('p') ? 'mx-px w-[31px] border border-[#adadad] bg-[#dcdcdc]' : 'w-[33px]'}`}
      >
        <Svg className={dim ? (v ? 'opacity-65' : 'opacity-40 grayscale-[60%]') : ''}>{I[icon]}</Svg>
        {f.includes('c') && <span className="absolute right-0.5 bottom-0.5"><Caret s={6} off={dim} /></span>}
      </button>
      {f.includes('a') && <span className="flex w-3 justify-center"><Caret off={dim} /></span>}
    </div>
  );
};

const bar1: (BarItem | '|' | ':')[] = [
  ['newDoc', 'Nuovo'], ['open', 'Apri'], ['save', 'Salva'], ['layoutNew', 'Nuovo layout'], ['layoutMgr', 'Gestore layout'], ['styleMgr', 'Gestore stili'], ':',
  ['pan', 'Sposta mappa', 'p'], ['panSel', 'Sposta su selezione', 'd'], ['zoomIn', 'Ingrandisci'], ['zoomOut', 'Riduci'], ['zoomFull', 'Zoom completo'], ['zoomSel', 'Zoom selezione', 'd'], ['zoomLayer', 'Zoom layer'], ['zoomNative', 'Zoom nativo', 'd'], ['zoomLast', 'Zoom precedente'], ['zoomNext', 'Zoom successivo', 'd'], ['newMap', 'Nuova vista mappa'], ['new3d', 'Nuova vista 3D'], ['newBook', 'Nuovo segnalibro'], ['book', 'Segnalibri'], ['clock', 'Controllo temporale'], ['refresh', 'Aggiorna'], ':',
  ['select', 'Seleziona elementi', 'a'], ['selEps', 'Seleziona per espressione', 'a'], ['deselect', 'Deseleziona', 'a'], ['selLoc', 'Seleziona per posizione'], ':',
  ['identify', 'Informazioni elementi'], ['abacus', 'Calcolatore di campi'], ['gear', 'Strumenti'], ['sigma', 'Statistiche'], ['table', 'Tabella attributi', 'a'], ['measure', 'Misura', 'a'], ['tip', 'Suggerimenti mappa'], ['action', 'Azione', 'da'], ':',
  ['arc', 'Stringa circolare', 'da'], ['circ', 'Cerchio', 'da'], ['ellip', 'Ellisse', 'da'], ['rectg', 'Rettangolo', 'da'], ['poly', 'Poligono regolare', 'da'], ':',
  ['hq', 'HQ'],
];
const bar2: (BarItem | '|' | ':')[] = [
  ['dsm', 'Gestore sorgenti dati'], ['gpkg', 'Nuovo GeoPackage'], ['shp', 'Nuovo shapefile'], ['spl', 'Nuovo SpatiaLite'], ['chip', 'Nuovo layer temporaneo'], ['mesh', 'Nuovo mesh'], '|', ['virt', 'Nuovo layer virtuale'], '|', ':',
  ['pencils', 'Modifiche in uso', 'dc'], ['pencil', 'Attiva modifiche'], ['saveEd', 'Salva modifiche', 'd'], ['addPoly', 'Aggiungi poligono', 'd'], ['vertex', 'Strumento vertici', 'da'], ['multi', 'Modifica multipla', 'd'], ['trash', 'Elimina selezionati', 'd'], ['cut', 'Taglia', 'd'], ['copy', 'Copia', 'd'], ['paste', 'Incolla', 'd'], ['undo', 'Annulla modifica', 'd'], ['redo', 'Ripristina modifica', 'd'], ':',
  ['hex', 'Topologia'], ['globeAdd', 'Aggiungi servizio', 'c'], ['globeFind', 'Cerca servizio'], ['globeBin', 'Metaricerca'], ':',
  ['python', 'Console Python'], ['infoGreen', 'Info plugin'], ':',
  ['help', 'Guida in linea'], ':', ['topo', 'Verifica topologia'], ':',
  ['abc', 'Etichette'], ['diagram', 'Diagrammi'], '|', ['abcPinBlue', 'Evidenzia etichette'], ['abcRed', 'Etichette non posizionate'], '|',
  ['abcPin', 'Blocca etichette'], ['abcEye', 'Mostra etichette'], ['abcMove', 'Sposta etichetta'], ['abcRot', 'Ruota etichetta'], ['abcEdit', 'Cambia etichetta'], ':',
  ['magnet', 'Attiva aggancio'], ['snapV', 'Aggancio layer', 'dc'], ['dots', 'Tipo aggancio', 'pc'],
];
const leftBar: BarItem[] = [
  ['square', 'Strumenti CAD', 'd'], ['segs', 'Digitalizza', 'da'], ['moveF', 'Sposta elemento', 'da'], ['rotF', 'Ruota elemento', 'd'], ['scaleF', 'Scala elemento', 'd'], ['simpl', 'Semplifica', 'd'], ['ring', 'Aggiungi buco', 'd'], ['part', 'Aggiungi parte', 'd'], ['fillR', 'Riempi buco', 'd'], ['delR', 'Elimina buco', 'd'], ['delP', 'Elimina parte', 'd'], ['resh', 'Modifica forma', 'd'], ['offset', 'Curva di offset', 'd'], ['split1', 'Inverti linea', 'd'], ['trim', 'Taglia/Estendi', 'd'], ['scis', 'Dividi elementi', 'd'], ['scis', 'Dividi parti', 'd'], ['merge', 'Fondi elementi', 'd'], ['rungs', 'Fondi attributi', 'd'], ['rotS', 'Ruota simboli', 'da'],
];

const Bar = ({ items, label, children }: Kids & { items: (BarItem | '|' | ':')[]; label: string }) => (
  <div role="toolbar" aria-label={label} className="flex h-[39px] shrink-0 items-center border-b border-[#b4b4b4] bg-linear-to-b from-[#fafafa] to-[#ededed]">
    <Handle first />
    {items.map((it, i) => (it === '|' ? <Sep key={i} /> : it === ':' ? <Handle key={i} /> : <TB key={i} item={it} />))}
    {children}
  </div>
);

const menu: [string, number][] = [['Progetto', 1], ['Modifica', 0], ['Visualizza', 0], ['Layer', 0], ['Impostazioni', 0], ['Plugins', 0], ['Vettore', 4], ['Raster', 0], ['Database', 0], ['Web', 0], ['Mesh', 0], ['Processing', 3], ['Guida', 0]];

const DockHead = ({ title }: { title: string }) => (
  <div className="flex h-5 shrink-0 items-center pr-0.5 pl-1">
    <h2>{title}</h2>
    <div className="ml-auto flex gap-[3px]">
      <button aria-label={`Sgancia ${title}`}>
        <svg width="11" height="11" viewBox="0 0 11 11" fill="none" stroke="#555"><rect x=".5" y=".5" width="10" height="10" rx="2" /><path d="M4.500 2.500h4v4h-4zM2.500 4.500h4v4h-4z" /></svg>
      </button>
      <button aria-label={`Chiudi ${title}`}>
        <svg width="11" height="11" viewBox="0 0 11 11" fill="none" stroke="#555"><rect x=".5" y=".5" width="10" height="10" rx="2" /><path d="M3 3l5 5M8 3L3 8" strokeWidth="1.800" /></svg>
      </button>
    </div>
  </div>
);

const Twisty = ({ state }: { state: string }) => (
  <svg width="8" height="8" viewBox="0 0 8 8" aria-hidden="true" className="shrink-0">
    {state === 'o' && <path d="M0 2h8L4 6.500z" fill="#555" />}
    {state === 'c' && <path d="M2 0v8l4-4z" fill="#555" />}
  </svg>
);

const browser: [string, string, string][] = [
  ['o', 'star', 'Preferiti'], ['cc', 'folder', 'materiale didattico v0'], ['c', 'bmark', 'Segnalibri Spaziali'], ['c', 'homeProj', 'Home Progetto'], ['c', 'home', 'Home'], ['c', 'folder', 'C:\\'], ['c', 'folder', 'D:\\ (Volume)'], ['c', 'folder', 'G:\\ (Google Drive)'], ['c', 'box', 'GeoPackage'], ['c', 'feather', 'SpatiaLite'], ['', 'pg', 'PostGIS'], ['', 'hana', 'SAP HANA'], ['', 'ms', 'MSSQL'], ['c', 'earth', 'WMS/WMTS'], ['', 'vtiles', 'Vector Tiles'], ['c', 'xyz', 'XYZ Tiles'], ['c', 'wcs', 'WCS'], ['c', 'wfs', 'WFS / OGC API - Features'], ['', 'arcgis', 'ArcGIS REST Servers'], ['', 'geonode', 'GeoNode'],
];

const HScroll = ({ thumb }: { thumb: string }) => (
  <div className="flex h-[15px] shrink-0 border-t border-[#b4b4b4] bg-[#e4e4e4]">
    <button aria-label="Scorri a sinistra" className="flex w-3.5 items-center justify-center border-r border-[#b4b4b4] bg-[#f5f5f5]">
      <svg width="8" height="8" viewBox="0 0 8 8"><path d="M6 0v8L2 4z" fill="#444" /></svg>
    </button>
    <div className="flex-1"><div className={`h-full border-r border-[#b4b4b4] bg-linear-to-b from-white to-[#f2f2f2] ${thumb}`} /></div>
    <button aria-label="Scorri a destra" className="flex w-3.5 items-center justify-center border-l border-[#b4b4b4] bg-[#f5f5f5]">
      <svg width="8" height="8" viewBox="0 0 8 8"><path d="M2 0v8l4-4z" fill="#444" /></svg>
    </button>
  </div>
);

const Select = ({ id, value, icon, className = '' }: { id: string; value: string; icon?: string; className?: string }) => (
  <div className={`relative flex items-center ${className}`}>
    {icon && <span className="pointer-events-none absolute left-[5px]"><Svg s={16}>{I[icon]}</Svg></span>}
    <select id={id} aria-label={value} className={`h-full w-full appearance-none truncate rounded-[3px] border border-[#adadad] bg-linear-to-b from-white to-[#efefef] pr-4 ${icon ? 'pl-[22px]' : 'pl-[3px]'}`}>
      <option>{value}</option>
    </select>
    <span className="pointer-events-none absolute right-[7px]"><Caret /></span>
  </div>
);

const Spin = ({ id, value, label, className = '', off = false }: { id: string; value: string; label: string; className?: string; off?: boolean }) => (
  <div className={`flex overflow-hidden rounded-[2px] border border-[#adadad] ${off ? 'bg-[#f4f4f4] text-[#808080]' : 'bg-white'} ${className}`}>
    <input id={id} aria-label={label} defaultValue={value} disabled={off} className="w-0 min-w-0 flex-1 px-1" />
    <div className="flex w-[13px] flex-col border-l border-[#adadad] bg-[#f7f7f7]">
      <button aria-label={`Aumenta ${label}`} className="flex flex-1 items-end justify-center pb-px"><svg width="7" height="5" viewBox="0 0 7 5"><path d="M0 5h7L3.500 0z" fill={off ? '#9a9a9a' : '#555'} /></svg></button>
      <button aria-label={`Riduci ${label}`} className="flex flex-1 items-start justify-center pt-px"><svg width="7" height="5" viewBox="0 0 7 5"><path d="M0 0h7L3.500 5z" fill={off ? '#9a9a9a' : '#555'} /></svg></button>
    </div>
  </div>
);

const Check = ({ id, on = false, label }: { id: string; on?: boolean; label?: string }) => (
  <span className="relative flex size-3.5 shrink-0">
    <input id={id} type="checkbox" defaultChecked={on} aria-label={label} className="peer size-3.5 appearance-none border border-[#adadad] bg-white" />
    <svg viewBox="0 0 14 14" className="pointer-events-none absolute inset-0 hidden size-3.5 peer-checked:block" fill="none" stroke="#111" strokeWidth="2"><path d="M3.500 7l2.500 3.500 4-7.500" /></svg>
  </span>
);

const SmallBtn = ({ icon, label, className = 'size-6', s = 16, off = false }: { icon: string; label: string; className?: string; s?: number; off?: boolean }) => (
  <button aria-label={label} disabled={off} className={`flex shrink-0 items-center justify-center rounded-[3px] border border-[#b8b8b8] bg-linear-to-b from-white to-[#efefef] ${className}`}>
    <Svg s={s}>{I[icon]}</Svg>
  </button>
);

/* ---------- map ---------- */

type Pt = [number, number];
const w = (s: string): Pt[] => s.trim().split(/\s+/).map((p) => p.split(',').map(Number) as Pt);
const e = (s: string): Pt[] => w(s).map(([x, y]) => [x + 900, y]);
const rev = (p: Pt[]) => [...p].reverse();
const toD = (...p: Pt[][]) => 'M' + p.flat().map(([x, y]) => `${x} ${y}`).join('L') + 'Z';

const tpPa = w('340,270 355,300 370,310 372,322 382,328 386,342 398,347 394,375 385,383 368,385 350,385 348,390 337,390 344,400 346,415 343,428 358,438 385,440 410,444 424,442 415,455 428,470 415,478 402,482 395,487 384,494');
const tpAg = w('384,494 360,502 345,515 338,528 328,545 322,560 334,565 331,580 331,600 330,640');
const paAg = w('384,494 395,500 400,512 420,523 432,525 445,520 470,525 480,530 492,538 496,560 508,565 515,575 525,558 545,553 558,542 566,543 566,552 556,555 558,565 565,575 560,585 570,590 564,602 568,614 576,621 590,612 600,606 592,598 590,590 594,570 588,548 600,542 612,550 625,543 635,546 655,540 660,551 690,551 702,543 720,540 740,530 742,516 750,512 778,516');
const agCl = w('778,516 800,518 812,512 824,520 822,530 818,543 830,553 802,560 795,572 770,583 745,588 757,605 757,640 745,655 740,668 755,670 772,678 790,688 805,682 830,686 845,681 852,700 878,706 870,718 868,735 890,747 915,753 930,768 948,775 940,790 942,806 932,825 937,835 931,845 950,862 958,880 958,930');
const paCl = w('778,516 780,503 796,500 800,485 811,473 820,485 820,502 840,508 860,520 867,530 870,555 885,565 900,575 920,568 935,566 933,550 950,532 967,538 985,542 992,552 1000,548');
const paEn = w('1000,548 1005,540 1003,520 1010,510 1030,505 1042,495 1062,488 1067,475 1075,458 1065,440 1058,425 1057,400 1060,395');
const paMe = e('105,250 113,287 130,310 145,330 148,342 163,343 158,360 162,393');
const meEn = e('162,395 190,390 205,385 232,373 240,383 262,388 259,400 270,406 278,395 288,378 308,368 312,358 322,366 316,385 340,403 365,404 385,410 400,398 412,395');
const meCt = e('412,395 425,390 445,400 440,375 425,360 412,372 410,340 420,338 426,346 430,338 418,325 425,308 440,302 455,312 463,297 468,315 485,308 492,300 510,292 525,320 540,334 560,328 600,325 610,321 635,326 660,340 675,358 690,378 720,390');
const enCt = e('412,395 415,415 403,422 412,440 400,458 408,462 405,478 415,486 440,470 448,463 452,510 466,518 469,545 457,560 459,572 452,605 440,600 425,590 415,578 400,573 370,585 330,585 310,600 290,612 305,616 308,632 320,645 335,650 350,652 370,664 348,680 350,700 330,712 305,720 312,735 305,747 275,725 263,738 278,748 262,758 225,757');
const enCl = e('100,548 108,555 107,572 95,580 97,610 110,640 90,660 62,693 70,710 78,740 98,741 105,738 125,748 145,742 158,732 175,733 202,742 204,752 225,757');
const clCt = e('225,757 228,774 242,768 244,790 240,820 250,835 262,838 270,833 283,840 297,868 288,890 275,895 278,915 283,925');
const clRg = e('283,925 262,940 240,960 220,1000');
const ctRg = e('283,925 305,915 330,908 338,920 355,915 370,905 375,893 390,897 400,883 420,873 432,868 438,882 460,882 468,875 478,872');
const rgSr = e('478,872 487,875 492,890 486,904 492,912 500,910 500,922 515,930 527,950 528,965 540,978 558,1010 540,998 528,988 514,975 513,965 502,965 505,982 520,990 530,998 528,1008 550,1020 560,1038 553,1046 535,1040 520,1038 525,1048 518,1067 545,1070 575,1083 592,1092 600,1140 590,1200');
const ctSr = e('640,700 600,690 590,688 555,688 540,675 520,663 508,670 500,688 487,690 480,705 466,713 455,725 480,731 495,726 515,737 510,752 490,770 475,772 458,797 465,804 485,806 500,814 510,806 512,818 498,830 495,840 500,860 480,862 462,856 465,868 478,872');

const coast = [
  ...w('70,465 86,445 72,425 66,405 92,395 92,372 100,345 96,325 110,310 130,292 138,283 160,284 176,274 180,252 192,248 205,252 218,240 222,222 212,205 212,196 222,206 238,204 240,222 250,245 262,265 285,288 300,292 312,305 345,297 380,283 408,262 406,242 396,226 408,208 410,192 425,185 448,190 462,200 482,192 492,182 488,168 500,178 515,172 530,160 542,168 545,180 560,190 562,222 575,238 600,243 622,240 634,230 645,226 656,236 655,262 670,278 700,293 720,305 750,306 772,320 800,318 840,302 880,272 906,272 920,262 935,278 955,280 985,270 1010,276'),
  ...e('130,278 180,276 205,270 235,252 265,256 290,246 305,236 345,222 370,200 386,178 400,158 430,163 450,153 475,150 493,135 506,148 520,158 565,156 570,170 585,178 630,155 650,130 665,105 668,85 660,68 660,72 672,90 670,110 690,112 740,95 775,75 800,48 822,35 850,45 885,52 855,66 842,80 838,95 845,105 832,140 820,170 810,195 780,235 760,270 740,300 718,330 712,352 695,365 690,390 672,405 666,430 676,445 672,470 670,490 656,505 660,545 630,580 618,600 622,605 612,610 618,660 622,695 632,722 660,728 672,738 690,736 700,750 715,770 702,780 685,772 678,795 690,810 698,832 710,828 708,845 722,856 748,858 745,885 760,900 774,925 748,925 735,945 715,955 690,978 676,1005 675,1020 655,1045 655,1068 650,1085 655,1102 668,1120 670,1145 684,1150 668,1162 652,1175 636,1165 630,1152 610,1145 590,1146 570,1155 555,1138 530,1132 510,1138 490,1150 465,1142 435,1140 420,1125 400,1115 360,1105 318,1102 302,1085 296,1060 270,1010 250,985 235,962 205,940 180,932 150,908 90,895 60,897'),
  ...w('930,897 905,910 880,908 865,898 850,882 800,878 775,862 755,850 745,830 720,812 695,793 640,790 618,782 600,762 560,742 545,725 530,722 522,705 500,685 475,658 462,660 430,653 395,662 385,642 360,613 345,606 300,605 250,610 205,626 190,605 175,590 170,575 155,568 145,558 120,560 110,545 95,535 92,500 80,482'),
];

const provinces: [string, string][] = [
  ['#cd2f87', toD(w('0,640 0,150 300,150'), tpPa, tpAg)],
  ['#c1e832', toD(w('300,100 1000,100'), paMe, rev(paEn), rev(paCl), rev(paAg), rev(tpPa))],
  ['#d06c6a', toD(rev(tpAg), paAg, agCl, w('900,1000 300,1000'))],
  ['#72e35a', toD(e('105,250 300,0 900,0 900,300'), rev(meCt), rev(meEn), rev(paMe))],
  ['#4b86ee', toD(paEn, meEn, enCt, rev(enCl))],
  ['#5cd8d8', toD(paCl, enCl, clCt, clRg, rev(agCl))],
  ['#dcb268', toD(rev(ctSr), e('700,700 760,500'), rev(meCt), enCt, clCt, ctRg)],
  ['#6b4bca', toD(rev(clRg), ctRg, rgSr, e('250,1200'))],
  ['#c233df', toD(ctSr, rgSr, e('850,1200 850,700'))],
];
const enclaves: [string, string][] = [
  ['#5cd8d8', 'M935 485l15-6 18 10-4 16-14 4-10 16-14-2-3-18 12-4z'],
  ['#c1e832', 'M457 560l10-4 10 5-6 8-10 2z'],
  ['#4b86ee', 'M970 594l7-1 6 9-5 3-6-3z'],
];

const INK = '#232323';
const SicilyMap = () => (
  <svg viewBox="302 129 777 842" preserveAspectRatio="xMidYMid meet" className="absolute inset-0 size-full" role="img" aria-label="Mappa della Sicilia con le province">
    <defs>
      <clipPath id="land"><path d={toD(coast)} /></clipPath>
      <filter id="soft" x="-20%" y="-20%" width="150%" height="150%"><feDropShadow dx="3" dy="3" stdDeviation="2.500" floodColor="#000" floodOpacity=".45" /></filter>
    </defs>
    <g transform="translate(440 250) scale(.33333)">
      <g clipPath="url(#land)" stroke="#333" strokeWidth="2.600" strokeLinejoin="round">
        {provinces.map(([c, d]) => <path key={c} d={d} fill={c} />)}
        {enclaves.map(([c, d]) => <path key={c} d={d} fill={c} />)}
      </g>
      <path d={toD(coast)} fill="none" stroke={INK} strokeWidth="22" strokeLinejoin="round" />
      <g fill={INK} stroke={INK} strokeWidth="4" strokeLinejoin="round">
        <path d="M62 398l22-4 18 18-4 24-22 6-14-16zM-2 324l14-6 12 16-4 12-14 2-10-12zM48 334l10-3 7 8-5 8-10-1zM-32 370l22-8 22 2 20 12 4 12-14 11-22-7-18-2-8-8zM110 284l10-4 8 8-10 8z" />
        <path d="M-30 322l6-4 6 4-6 5zM-150 354l14 2 12 8 8 16-6 10-12 4-18-12-8-16z" />
      </g>
    </g>
    <g transform="translate(570 135) scale(.33333)" fill={INK} stroke={INK} strokeWidth="5" strokeLinejoin="round">
      <path d="M34 176l12-11 16 1 7 12-8 12-18 7-10-6z" />
      <path d="M674 250l10-7 11 4 4 12-8 11-12 2-7-10zM779 222l12-7 16 5 10 16 1 10-12 4-18-8-7-10z" />
      <path d="M918 216l16-7 24-1 8 2 3 20-4 20-8 1-14-7-20-6-6-10zM977 256l20-10 16 2 7 12 8 18-8 14-2 20 6 12 16 14 5 12-8 10-14 0-18-14-6-16 2-16-10-14-12-10z" />
      <path d="M1052 162l10-6 12 2 4-14 12 0 2 12 0 10-12 6-10 0-8 10-10-2zM1116 58l10-16 18-2 11 13-6 19-16 6-14-10z" />
      <path d="M932 226h22v8l-12-3z M991 265h12v18h-10z M1018 338l10 6" fill="#72e35a" stroke="none" />
    </g>
    <path d="M378 627l4-2 6 3 8 2 6 6 3 7-2 7-6 2-7-3-5-6-5-7z" fill="#cd2f87" stroke={INK} strokeWidth="6" strokeLinejoin="round" />
    <g fill={INK} stroke={INK} strokeLinejoin="round">
      <path d="M554 838l4-2h4l2 4-2 5-4 1-4-3zM458 916l3-2 2 2-2 2zM497 920l4-2 6 1 11 0 2 6-2 4-8-2-8-1-5-2z" strokeWidth="2" />
    </g>
    <path d="M771 563l-8.300 27.700 6-3L805.500 816h2L780 586l6.500 1.300z" fill="#f00" filter="url(#soft)" />
    <g filter="url(#soft)" fontFamily="Liberation Sans, sans-serif" fontSize="25" fill="#f00" stroke="#fff" strokeWidth="4" strokeLinejoin="round" paintOrder="stroke">
      <text x="727" y="853">Unico contorno</text>
      <text x="727" y="881">per tutte le geometrie!!!</text>
    </g>
  </svg>
);

/* ---------- symbol tree ---------- */

const Swatch = ({ kind }: { kind: string }) => (
  <span
    className={`size-4 shrink-0 ${kind === 'full' ? 'border-2 border-[#232323] bg-[#987db7]' : kind === 'sel' ? 'border-[3px] border-[#26486e] bg-white' : kind === 'hollow' ? 'border-[3px] border-[#232323] bg-white' : 'border border-[#6b5a80] bg-[#987db7]'}`}
  />
);
const symbols: [string, string, string, string, boolean][] = [
  ['pl-[6px]', 'o', 'full', 'Riempimento', true],
  ['pl-[26px]', 'o', 'sel', 'Generatore Geometria', false],
  ['pl-[46px]', 'o', 'hollow', 'Riempimento', true],
  ['pl-[66px]', '', 'hollow', 'Riempimento semplice', false],
  ['pl-[26px]', '', 'plain', 'Riempimento semplice', false],
];

/* ---------- page ---------- */

const SMALL = "font-['Roboto','Liberation_Sans',sans-serif]";

export default function App() {
  return (
    <div className="flex h-screen w-full flex-col overflow-hidden border border-[#222] bg-[#efefef] font-['Noto_Sans','Open_Sans',sans-serif] text-[11px] leading-[18px] text-black">
      <header className="flex h-[30px] shrink-0 items-center bg-white pl-2">
        <svg width="16" height="16" viewBox="0 0 24 24" fill="none" aria-hidden="true">
          <circle cx="11.500" cy="11.500" r="8.500" stroke="#6ba52f" strokeWidth="5.500" />
          <path d="M11.500 10.500h3l9 9.500v3h-5l-7-8.500z" fill="#93b023" />
          <path d="M10 9l5 1-4 5z" fill="#ee7913" />
        </svg>
        <h1 className="ml-[5px]">*progetto — QGIS [CorsoQGIScls4]</h1>
        <div className="ml-auto flex">
          {[['Riduci a icona', 'M0 5.500h10'], ['Ingrandisci', 'M.500.500h9v9h-9z'], ['Chiudi', 'M.500.500l9 9M9.500.500l-9 9']].map(([l, d]) => (
            <button key={l} aria-label={l} className="flex h-[30px] w-[46px] items-center justify-center">
              <svg width="10" height="10" viewBox="0 0 10 10" fill="none" stroke="#000" strokeWidth="1.100"><path d={d} /></svg>
            </button>
          ))}
        </div>
      </header>

      <nav className="flex h-5 shrink-0 items-center gap-3.5 border-b border-[#d0d0d0] pl-2.5">
        {menu.map(([t, u]) => (
          <button key={t}>{t.slice(0, u)}<u>{t[u]}</u>{t.slice(u + 1)}</button>
        ))}
      </nav>

      <Bar items={bar1} label="Progetto e navigazione" />
      <Bar items={bar2} label="Dati e modifiche">
        <Spin id="tol" value="12" label="Tolleranza" className="ml-px h-5 w-20" off />
        <div className="relative ml-0.5 flex h-[21px] w-[88px] items-center text-[#808080]">
          <select aria-label="Unità tolleranza" disabled className="h-full w-full appearance-none rounded-[2px] border border-[#bdbdbd] bg-[#f4f4f4] pl-1"><option>px</option></select>
          <span className="pointer-events-none absolute right-2"><Caret off /></span>
        </div>
        <button aria-label="Modifica topologica" className="ml-1.5"><Svg>{I.tee}</Svg></button>
        <button className="mr-1 ml-auto text-base leading-4" aria-label="Altri strumenti">»</button>
      </Bar>

      <main className="flex min-h-0 flex-1">
        <div role="toolbar" aria-label="Digitalizzazione avanzata" className="flex w-[51px] shrink-0 flex-col overflow-hidden border-r border-[#b4b4b4] bg-linear-to-r from-white to-[#ebebeb]">
          <div className="mx-auto mt-1.5 h-1 w-4 shrink-0 bg-[radial-gradient(circle,#b0b0b0_35%,transparent_40%)] bg-[length:4px_4px]" />
          <div className="mt-0.5 flex flex-col">
            {leftBar.map((it, i) => <TB key={i} item={it} v />)}
          </div>
        </div>

        <aside className="flex w-[250px] shrink-0 flex-col">
          <section className="flex min-h-0 flex-[434] flex-col pr-1.5 pl-px">
            <DockHead title="Browser" />
            <div className="flex h-[30px] shrink-0 items-center gap-[9px] pb-0.5 pl-2">
              {[['addSel', 'Aggiungi layer selezionati'], ['refresh', 'Aggiorna browser'], ['funnel', 'Filtra browser'], ['up', 'Racchiudi tutto'], ['info', 'Proprietà']].map(([i, l]) => (
                <button key={i} aria-label={l}><Svg s={16}>{I[i]}</Svg></button>
              ))}
            </div>
            <ul className="min-h-0 flex-1 overflow-hidden border border-[#b4b4b4] bg-white pt-px">
              {browser.map(([st, ic, t]) => (
                <li key={t} className={`flex h-[18px] items-center gap-1.5 ${st === 'cc' ? 'pl-5' : 'pl-1'}`}>
                  <Twisty state={st[0] || ''} />
                  <Svg s={16}>{I[ic]}</Svg>
                  <span>{t}</span>
                </li>
              ))}
            </ul>
            <div className="mx-auto my-px h-[3px] w-4 shrink-0 border-t border-dotted border-[#999]" />
          </section>

          <section className="flex min-h-0 flex-[409] flex-col pr-1.5 pl-px">
            <div className="h-0.5 shrink-0" />
            <DockHead title="Layer" />
            <div className="flex h-[30px] shrink-0 items-center gap-[9px] pb-0.5 pl-1">
              <button aria-label="Stile layer" className="-mr-1 flex size-[23px] items-center justify-center rounded-[2px] border border-[#adadad] bg-[#dcdcdc]"><Svg s={16}>{I.brushO}</Svg></button>
              <button aria-label="Aggiungi gruppo"><Svg s={16}>{I.groupAdd}</Svg></button>
              <button aria-label="Temi mappa" className="relative"><Svg s={16}>{I.eye}</Svg><span className="absolute -right-1 -bottom-1"><Caret s={6} /></span></button>
              <button aria-label="Filtra legenda" className="relative"><Svg s={16}>{I.funnel}</Svg><span className="absolute -right-1 -bottom-1"><Caret s={6} /></span></button>
              <button aria-label="Filtra per espressione" disabled className="flex w-[29px] items-center gap-1.5"><Svg s={16} className="shrink-0 opacity-60">{I.epsF}</Svg><Caret off /></button>
              <button aria-label="Espandi tutto"><Svg s={16}>{I.down}</Svg></button>
              <button aria-label="Racchiudi tutto"><Svg s={16}>{I.up}</Svg></button>
              <button aria-label="Rimuovi layer"><Svg s={16}>{I.remove}</Svg></button>
            </div>
            <div className="flex min-h-0 flex-1 flex-col border border-[#b4b4b4] bg-white">
              <div className="relative flex h-[18px] items-center overflow-hidden pl-1.5">
                <Twisty state="c" />
                <span className="ml-2.5"><Check id="lyr" on /></span>
                <Svg s={16} className="mx-1.5 shrink-0">{I.polygon}</Svg>
                <label htmlFor="lyr" className="font-bold whitespace-nowrap underline">limiti_admin_ISTAT_2021_WGS84</label>
                <span className="absolute right-1.5 flex size-4 items-center justify-center border border-[#ddd] bg-[#f4f4f4]"><Svg s={13}>{I.filterGrey}</Svg></span>
              </div>
              <div className="flex-1" />
              <HScroll thumb="w-[58%]" />
            </div>
          </section>
        </aside>

        <section className="relative min-w-0 flex-1 overflow-hidden border-x border-b border-[#b4b4b4] bg-white">
          <SicilyMap />
        </section>

        <aside className="flex w-[614px] shrink-0 flex-col pl-[9px]">
          <div className="-ml-1"><DockHead title="Stile layer" /></div>
          <Select id="layer" value="limiti_admin_ISTAT_2021_WGS84 — ProvCM01012021_WGS84" icon="polygon" className={`mt-[3px] mr-0.5 h-6 shrink-0 ${SMALL}`} />
          <div className="flex min-h-0 flex-1">
            <div className="flex w-[38px] shrink-0 flex-col pb-0.5">
              <button aria-label="Simbologia" className="flex h-[37px] items-center justify-center pt-2 pr-1"><Svg s={23}>{I.brush}</Svg></button>
              <div className="flex flex-1 flex-col items-center gap-2 bg-[#5e5e5e] pt-1 pr-2">
                {[['abcYellow', 'Etichette'], ['abcMask', 'Maschere'], ['cube', 'Vista 3D'], ['tree3', 'Diagrammi'], ['history', 'Cronologia']].map(([i, l]) => (
                  <button key={i} aria-label={l}><Svg>{I[i]}</Svg></button>
                ))}
              </div>
            </div>

            <div className={`flex min-w-0 flex-1 flex-col pt-1.5 pr-0.5 pl-[3px] ${SMALL}`}>
              <div className="flex h-6 shrink-0 items-center gap-2">
                <SmallBtn icon="back" label="Indietro" className="h-6 w-6" />
                <h3>Impostazioni Simbolo</h3>
              </div>

              <div className="mt-1 flex h-[136px] shrink-0 font-['Noto_Sans','Open_Sans',sans-serif]">
                <div className="flex w-[142px] shrink-0 items-center justify-center pr-[5px]">
                  <div className="size-[66px] rounded-[3px] border-[6px] border-[#232323] bg-[#987db7]" />
                </div>
                <ul className="min-w-0 flex-1 border border-[#b4b4b4] bg-white pt-px">
                  {symbols.map(([pl, st, k, t, b], i) => (
                    <li key={i} className={`flex h-[18px] items-center ${pl} ${k === 'sel' ? 'bg-[#efefef]' : ''}`}>
                      <Twisty state={st} />
                      <span className="ml-[9px] flex"><Swatch kind={k} /></span>
                      <span className={`ml-1.5 ${b ? 'font-bold' : ''}`}>{t}</span>
                    </li>
                  ))}
                </ul>
                <div className="ml-1.5 grid shrink-0 auto-rows-min grid-cols-2 gap-x-1.5 gap-y-[5px] pt-px">
                  {[['plus', 'Aggiungi'], ['triUp', 'Su'], ['minus', 'Rimuovi'], ['triDown', 'Giù'], ['dup', 'Duplica'], ['lockOpen', 'Blocca']].map(([i, l]) => (
                    <SmallBtn key={i} icon={i} label={l} off={i === 'triUp'} className="h-6 w-7" />
                  ))}
                </div>
              </div>

              <div className="mt-[5px] h-px shrink-0 bg-[#a0a0a0]" />

              <div className="mt-2.5 flex h-[23px] shrink-0 items-center pr-2.5">
                <label htmlFor="stype" className="w-[118px] shrink-0 whitespace-nowrap">Tipo simbolo del vettore</label>
                <Select id="stype" value="Generatore Geometria" className="h-full flex-1" />
              </div>

              <div className="mt-3 grid shrink-0 grid-cols-[88px_1fr] items-center gap-y-1.5 pr-5 pl-2.5">
                <label htmlFor="gtype">Tipo di geometria</label>
                <Select id="gtype" value="Poligono / MultiPoligono" icon="polygon" className="h-6" />
                <label htmlFor="unit">Unità</label>
                <Select id="unit" value="Unità Mappa" className="h-[22px]" />
              </div>

              <div className="mt-[5px] flex min-h-0 flex-1 gap-1.5 pr-5 pl-2.5">
                <div className="relative flex min-w-0 flex-1 flex-col border border-[#b4b4b4] bg-white">
                  <div role="textbox" aria-label="Espressione" contentEditable suppressContentEditableWarning className="min-h-0 flex-1 font-['Liberation_Mono',monospace] text-[15px] leading-[19px] outline-none">
                    <div className="border-l border-[#555] bg-[#efefef] text-[#4271ae]">buffer<span className="text-[#b4429f]">(</span>collect<span className="text-[#b4429f]">(</span><span className="text-[#6b4a2a]">$</span>geometry<span className="text-[#b4429f]">)</span>,<span className="text-[#c82829]">0</span><span className="text-[#b4429f]">)</span></div>
                  </div>
                  <HScroll thumb="w-1/4" />
                  <svg width="80" height="250" viewBox="0 0 80 250" className="pointer-events-none absolute top-[26px] left-[95px]" aria-hidden="true">
                    <defs><filter id="sh2" x="-20%" y="-20%" width="160%" height="140%"><feDropShadow dx="3" dy="3" stdDeviation="2.500" floodOpacity=".45" /></filter></defs>
                    <path d="M18 3l-7 28 5-3L58.500 233h2L29 26l7 2z" fill="#f00" filter="url(#sh2)" />
                  </svg>
                </div>
                <button aria-label="Costruttore espressioni" className="h-6 w-6 shrink-0 rounded-[3px] border border-[#b8b8b8] bg-linear-to-b from-white to-[#efefef] font-['Liberation_Serif',serif] text-xl leading-4 font-bold text-[#6b3a78]">ε</button>
              </div>

              <div className="mt-3 flex h-6 shrink-0 items-center pl-px">
                <Check id="en" on />
                <label htmlFor="en" className="ml-[5px] w-[108px]">Abilita layer simbolo</label>
                <button aria-label="Sovrascrittura dati" className="ml-px"><Svg s={22}>{I.defined}</Svg></button>
                <span className="ml-[41px]"><Check id="fx" /></span>
                <label htmlFor="fx" className="ml-1 w-[83px]">Effetti disegno</label>
                <SmallBtn icon="fx" label="Personalizza effetti" off />
              </div>

              <div className="mt-[23px] mb-0.5 flex h-6 shrink-0 items-center">
                <SmallBtn icon="undoO" label="Annulla" />
                <SmallBtn icon="redoG" label="Ripristina" className="ml-1.5 size-6" />
                <span className="ml-auto"><Check id="live" on /></span>
                <label htmlFor="live" className="ml-1 w-[138px] whitespace-nowrap">Aggiornamento immediato</label>
                <button className="h-[21px] w-20 rounded-[3px] border border-[#adadad] bg-linear-to-b from-white to-[#efefef]">Applica</button>
              </div>
            </div>
          </div>
        </aside>
      </main>

      <footer className={`flex h-7 shrink-0 items-center pt-px pl-1 ${SMALL}`}>
        <div className="flex h-[22px] w-[253px] shrink-0 items-center rounded-[3px] border border-[#adadad] bg-white pl-2">
          <Svg s={12}>{I.search}</Svg>
          <input aria-label="Localizza" placeholder="Digita per localizzare (Ctrl+K)" className="ml-2 min-w-0 flex-1 placeholder:text-[#808080]" />
        </div>
        <span className="ml-2 whitespace-nowrap">1 voci in legenda eliminate.</span>
        <div className="ml-auto flex shrink-0 items-center">
          <label htmlFor="xy" className="w-[57px]">Coordinata</label>
          <input id="xy" defaultValue="1032964 4323271" className="h-[21px] w-[102px] rounded-[2px] border border-[#adadad] bg-white text-center" />
          <button aria-label="Mostra estensione" className="ml-1"><Svg s={16}>{I.mouse}</Svg></button>
          <label htmlFor="scale" className="ml-3 w-[29px]">Scala</label>
          <Select id="scale" value="1:1850745" className="h-[21px] w-20" />
          <button aria-label="Blocca scala" className="ml-2.5"><Svg s={15}>{I.lock}</Svg></button>
          <label htmlFor="zoom" className="ml-[7px] w-[111px] whitespace-nowrap">Lente d'ingrandimento</label>
          <Spin id="zoom" value="100%" label="Lente" className="h-5 w-[83px]" />
          <label htmlFor="rot" className="ml-[9px] w-[58px]">Rotazione</label>
          <Spin id="rot" value="0,0 °" label="Rotazione" className="h-5 w-[84px]" />
          <span className="ml-1.5"><Check id="rend" on /></span>
          <label htmlFor="rend" className="ml-1 w-[61px]">Visualizza</label>
          <button className="flex w-[100px] items-center gap-px whitespace-nowrap"><Svg s={16}>{I.globeG}</Svg>EPSG:32632</button>
          <button aria-label="Messaggi"><Svg s={16}>{I.bubble}</Svg></button>
          <div className="mr-px ml-[17px] h-3 w-3 self-end bg-[radial-gradient(circle,#a8a8a8_35%,transparent_40%)] bg-[length:4px_4px] [clip-path:polygon(100%_0,100%_100%,0_100%)]" />
        </div>
      </footer>
    </div>
  );
}
